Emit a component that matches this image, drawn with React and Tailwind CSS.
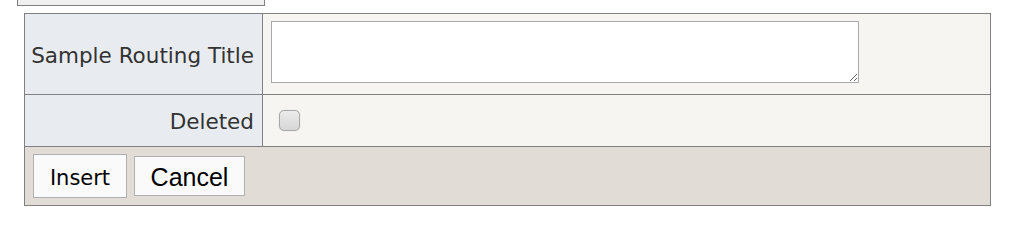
import React from "react";

const App = () => {
  return (
    <div className="bg-white min-h-[231px] font-['DejaVu_Sans',Verdana,sans-serif] text-[#333]">
      <div className="ml-[17px] w-[248px] h-[6px] border-x border-b border-[#808080] bg-[#f0f0f0]"></div>
      <table className="ml-[24px] mt-[7px] w-[967px] border-collapse border border-[#808080]">
        <tbody>
          <tr className="h-[81px]">
            <td className="w-[238px] whitespace-nowrap border border-[#808080] bg-[#e8ecf1] pl-[4px] pr-[8px] pt-[4px] text-right text-[21.5px]">
              Sample Routing Title
            </td>
            <td className="border border-[#808080] bg-[#f6f5f1] px-[8px] pt-[7px] pb-[11px]">
              <textarea className="block w-[588px] h-[62px] border border-[#a9a9a9] bg-white resize-y"></textarea>
            </td>
          </tr>
          <tr className="h-[52px]">
            <td className="whitespace-nowrap border border-[#808080] bg-[#e8ecf1] pl-[4px] pr-[8px] pt-[4px] text-right text-[21.5px]">
              Deleted
            </td>
            <td className="border border-[#808080] bg-[#f6f5f1] pl-[16px]">
              <div className="w-[21px] h-[21px] rounded-[5px] border border-[#a8a8a8] bg-gradient-to-b from-[#ececec] to-[#d6d6d6] shadow-[0_0_1px_#bbb]"></div>
            </td>
          </tr>
          <tr className="h-[59px]">
            <td colSpan={2} className="border border-[#808080] bg-[#e1ddd6] px-[8px]">
              <div className="flex items-center gap-[7px]">
                <button className="w-[94px] h-[44px] pt-[5px] border border-[#b0b0b0] bg-[#fafafa] text-[21px] text-black font-['DejaVu_Sans',Verdana,sans-serif]">
                  Insert
                </button>
                <button className="w-[111px] h-[40px] pt-[2px] border border-[#b0b0b0] bg-[#fafafa] text-[25px] text-black font-['Liberation_Sans',Arial,sans-serif]">
                  Cancel
                </button>
              </div>
            </td>
          </tr>
        </tbody>
      </table>
    </div>
  );
};

export default App;
